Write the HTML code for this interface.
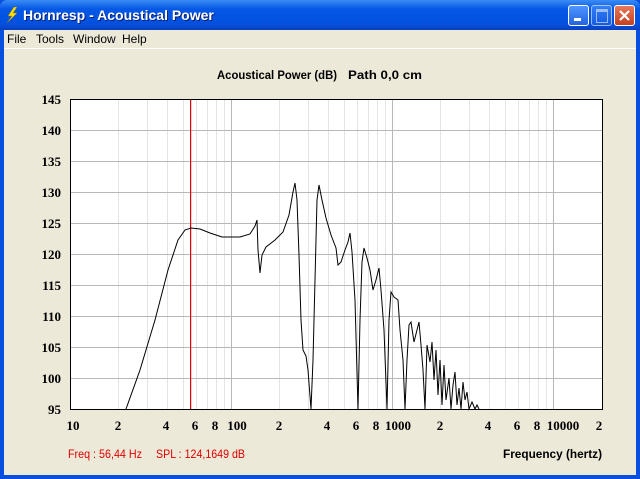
<!DOCTYPE html>
<html><head><style>
body{margin:0;width:640px;height:479px;overflow:hidden;font-family:"Liberation Sans",sans-serif;}
.win{position:absolute;left:0;top:0;width:640px;height:479px;background:#0a4ee0;}
.title{position:absolute;left:0;top:0;width:640px;height:30px;background:linear-gradient(#3b8cf5,#0558e6 30%,#0450de 80%,#0a3fc0);border-radius:7px 7px 0 0;}
.title span{position:absolute;left:23px;top:7px;color:#fff;font-weight:bold;font-size:14px;text-shadow:1px 1px #0a1e70;}
.btn{position:absolute;top:5px;width:21px;height:21px;border:1px solid #fff;border-radius:3px;background:linear-gradient(#4f95ff,#2463e0);box-sizing:border-box;}
.client{position:absolute;left:4px;top:30px;width:632px;height:445px;background:#ECE9D8;}
.menu{position:absolute;left:0;top:0;width:632px;height:18px;font-size:12px;border-bottom:1px solid #fff;}
.menu span{position:absolute;top:2px;}
</style></head><body>
<div class="win">
<div class="title"><svg style="position:absolute;left:5px;top:7px" width="14" height="16"><path d="M9 0 L3 9 L7 9 L2 16 L12 6 L8 6 L12 0Z" fill="#ffe000" stroke="#a08000" stroke-width=".5"/></svg><span>Hornresp - Acoustical Power</span>
<div class="btn" style="left:568px"><div style="position:absolute;left:5px;top:12px;width:7px;height:3px;background:#fff"></div></div>
<div class="btn" style="left:591px;opacity:.6"><div style="position:absolute;left:4px;top:3px;width:10px;height:10px;border:1px solid #fff;border-top-width:3px"></div></div>
<div class="btn" style="left:614px;background:linear-gradient(#e8785a,#c5401f)"><svg width="19" height="19"><path d="M5 5L14 14M14 5L5 14" stroke="#fff" stroke-width="2.2"/></svg></div>
</div>
<div class="client">
<div class="menu"><span style="left:3px">File</span><span style="left:32px">Tools</span><span style="left:69px">Window</span><span style="left:118px">Help</span></div>
</div>
<svg style="position:absolute;left:0;top:0" width="640" height="479" font-family="Liberation Sans,sans-serif">
<text x="217" y="79" font-size="12" font-weight="bold" textLength="120" lengthAdjust="spacingAndGlyphs">Acoustical Power (dB)</text>
<text x="348" y="79" font-size="12" font-weight="bold" textLength="74" lengthAdjust="spacingAndGlyphs">Path 0,0 cm</text>
<rect x="70.5" y="99.5" width="532" height="310" fill="#fff" stroke="#000"/>
<g stroke="#e4e4e4">
<path d="M118.5 100V409M147.5 100V409M167.5 100V409M183.5 100V409M196.5 100V409M207.5 100V409M216.5 100V409M224.5 100V409
M279.5 100V409M308.5 100V409M328.5 100V409M344.5 100V409M357.5 100V409M368.5 100V409M377.5 100V409M385.5 100V409
M440.5 100V409M469.5 100V409M489.5 100V409M505.5 100V409M518.5 100V409M529.5 100V409M538.5 100V409M546.5 100V409"/>
</g>
<g stroke="#b8b8b8">
<path d="M231.5 100V409M392.5 100V409M553.5 100V409M71 130.5H602M71 161.5H602M71 192.5H602M71 223.5H602M71 254.5H602M71 285.5H602M71 316.5H602M71 347.5H602M71 378.5H602"/>
</g>
<rect x="190" y="100" width="1.2" height="309" fill="#e00000"/>
<polyline fill="none" stroke="#000" stroke-width="1" points="126,409 140,370 155,320 168,270 178,240 185,230 191,228 200,229 210,233 222,237 240,237 250,234 255,226 257,220 258,250 260,273 262,255 266,247 275,240 283,232 289,215 293,192 295,183 297,200 299,255 301,320 303,350 306,356 308,370 311,409 313,360 315,280 317,200 319,185 322,200 326,218 331,235 336,248 338,265 341,262 345,250 348,242 350,233 352,252 355,300 358,409 360,320 362,262 364,248 367,258 370,270 373,290 376,280 379,268 381,290 384,330 387,409 389,320 391,292 394,297 398,300 400,330 403,360 405,409 407,360 409,325 411,322 414,342 417,330 419,322 421,345 423,370 425,409 427,345 430,362 432,342 434,380 436,350 438,395 440,360 442,405 444,365 446,400 449,378 451,409 453,385 455,372 457,405 459,388 461,409 463,382 465,400 467,392 469,409 472,402 475,409 477,405 479,409"/>
<g font-size="13" font-weight="bold" font-family="Liberation Serif,serif" text-anchor="end">
<text x="61" y="104">145</text><text x="61" y="135">140</text><text x="61" y="166">135</text><text x="61" y="197">130</text><text x="61" y="228">125</text><text x="61" y="259">120</text><text x="61" y="290">115</text><text x="61" y="321">110</text><text x="61" y="352">105</text><text x="61" y="383">100</text><text x="61" y="414">95</text>
</g>
<g font-size="13" font-weight="bold" font-family="Liberation Serif,serif" text-anchor="middle">
<text x="73" y="430">10</text><text x="118" y="430">2</text><text x="166" y="430">4</text><text x="195" y="430">6</text><text x="215" y="430">8</text><text x="237" y="430">100</text>
<text x="279" y="430">2</text><text x="327" y="430">4</text><text x="356" y="430">6</text><text x="376" y="430">8</text><text x="398" y="430">1000</text>
<text x="440" y="430">2</text><text x="488" y="430">4</text><text x="517" y="430">6</text><text x="537" y="430">8</text><text x="563" y="430">10000</text><text x="599" y="430">2</text>
</g>
<text x="68" y="458" font-size="12" fill="#e00000" textLength="74" lengthAdjust="spacingAndGlyphs">Freq : 56,44 Hz</text>
<text x="156" y="458" font-size="12" fill="#e00000" textLength="89" lengthAdjust="spacingAndGlyphs">SPL : 124,1649 dB</text>
<text x="503" y="458" font-size="12" font-weight="bold" textLength="99" lengthAdjust="spacingAndGlyphs">Frequency (hertz)</text>
</svg>
</div>
</body></html>
